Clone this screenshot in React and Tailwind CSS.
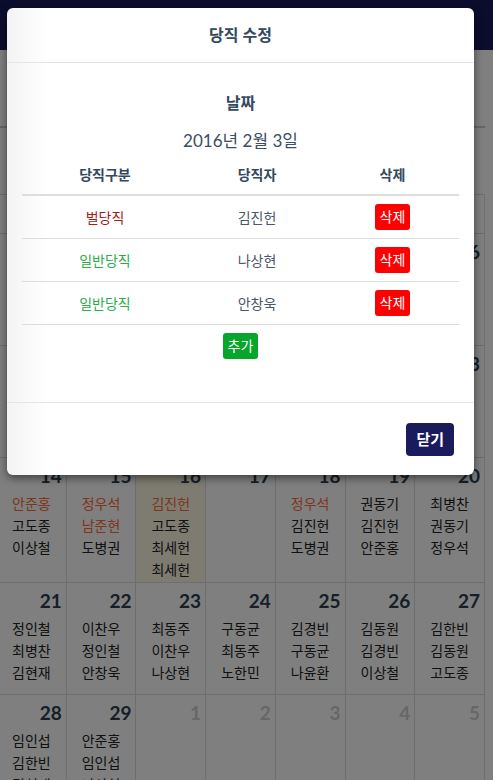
import React from 'react'

const font = "font-['Lato','Noto_Sans_CJK_KR',sans-serif]"

// r: 벌당직 (red name)
const weeks = [
  [
    { d: 31, other: true, n: [] },
    { d: 1, n: [{ t: '김동원', r: 1 }, { t: '구동균' }, { t: '나윤환' }] },
    { d: 2, n: [{ t: '최병찬' }, { t: '이찬우' }, { t: '정인철' }] },
    { d: 3, n: [{ t: '김진헌', r: 1 }, { t: '나상현' }, { t: '안창욱' }] },
    { d: 4, n: [{ t: '임인섭' }, { t: '김한빈' }, { t: '고도종' }] },
    { d: 5, n: [{ t: '도병권' }, { t: '권동기' }, { t: '이상철' }] },
    { d: 6, n: [{ t: '정우석' }, { t: '김경빈' }, { t: '최동주' }] },
  ],
  [
    { d: 7, n: [{ t: '안준홍' }, { t: '노한민' }, { t: '김현재' }] },
    { d: 8, n: [{ t: '남준현' }, { t: '최세헌' }, { t: '이상철' }] },
    { d: 9, n: [{ t: '구동균' }, { t: '김동원' }, { t: '정인철' }] },
    { d: 10, n: [{ t: '이찬우' }, { t: '나상현' }, { t: '김한빈' }] },
    { d: 11, n: [{ t: '권동기' }, { t: '고도종' }, { t: '안창욱' }] },
    { d: 12, n: [{ t: '최병찬' }, { t: '임인섭' }, { t: '나윤환' }] },
    { d: 13, n: [{ t: '김경빈' }, { t: '도병권' }, { t: '최동주' }] },
  ],
  [
    { d: 14, n: [{ t: '안준홍', r: 1 }, { t: '고도종' }, { t: '이상철' }] },
    { d: 15, n: [{ t: '정우석', r: 1 }, { t: '남준현', r: 1 }, { t: '도병권' }] },
    { d: 16, today: true, n: [{ t: '김진헌', r: 1 }, { t: '고도종' }, { t: '최세헌' }, { t: '최세헌' }] },
    { d: 17, n: [] },
    { d: 18, n: [{ t: '정우석', r: 1 }, { t: '김진헌' }, { t: '도병권' }] },
    { d: 19, n: [{ t: '권동기' }, { t: '김진헌' }, { t: '안준홍' }] },
    { d: 20, n: [{ t: '최병찬' }, { t: '권동기' }, { t: '정우석' }] },
  ],
  [
    { d: 21, n: [{ t: '정인철' }, { t: '최병찬' }, { t: '김현재' }] },
    { d: 22, n: [{ t: '이찬우' }, { t: '정인철' }, { t: '안창욱' }] },
    { d: 23, n: [{ t: '최동주' }, { t: '이찬우' }, { t: '나상현' }] },
    { d: 24, n: [{ t: '구동균' }, { t: '최동주' }, { t: '노한민' }] },
    { d: 25, n: [{ t: '김경빈' }, { t: '구동균' }, { t: '나윤환' }] },
    { d: 26, n: [{ t: '김동원' }, { t: '김경빈' }, { t: '이상철' }] },
    { d: 27, n: [{ t: '김한빈' }, { t: '김동원' }, { t: '고도종' }] },
  ],
  [
    { d: 28, n: [{ t: '임인섭' }, { t: '김한빈' }, { t: '김현재' }] },
    { d: 29, n: [{ t: '안준홍' }, { t: '임인섭' }, { t: '나상현' }] },
    { d: 1, other: true, n: [] },
    { d: 2, other: true, n: [] },
    { d: 3, other: true, n: [] },
    { d: 4, other: true, n: [] },
    { d: 5, other: true, n: [] },
  ],
]

const duties = [
  { kind: '벌당직', cls: 'text-[#a61c1c]', name: '김진헌' },
  { kind: '일반당직', cls: 'text-[#2aad48]', name: '나상현' },
  { kind: '일반당직', cls: 'text-[#2aad48]', name: '안창욱' },
]

function Calendar() {
  return (
    <div className="w-[488px] -ml-[3px]">
      <div className="grid grid-cols-7 h-[40px] border-t border-b border-[#dddddd]">
        {['일', '월', '화', '수', '목', '금', '토'].map((w) => (
          <div key={w} className="border-r border-[#dddddd] flex items-center justify-center text-[14px] font-bold text-[#2c3e50]">{w}</div>
        ))}
      </div>
      {weeks.map((week, wi) => (
        <div key={wi} className="grid grid-cols-7 min-h-[112px] border-b border-[#dddddd]">
          {week.map((c, ci) => (
            <div key={ci} className={`border-r border-[#dddddd] ${c.today ? 'bg-[#fcf8e3]' : ''}`}>
              <div className={`text-right pr-[4px] pt-[5px] text-[19px] leading-[26px] font-bold ${c.other ? 'text-[#cfcfcf]' : 'text-[#2c3e50]'}`}>{c.d}</div>
              <div className="mt-[4px] pl-[15px] pb-[1px] text-[14px] leading-[22px]">
                {c.n.map((p, pi) => (
                  <div key={pi} className={p.r ? 'text-[#ff6a3a]' : 'text-[#222222]'}>{p.t}</div>
                ))}
              </div>
            </div>
          ))}
        </div>
      ))}
    </div>
  )
}

function DutyModal() {
  return (
    <div className="absolute left-[7px] top-[8px] w-[467px] rounded-[6px] bg-[linear-gradient(to_right,#f3f3f3,#ffffff_40px)] shadow-[0_3px_9px_rgba(0,0,0,0.5)] text-[#34495e]">
      <div className="h-[55px] flex items-center justify-center border-b border-[#e5e5e5] text-[16px] font-bold">당직 수정</div>

      <div className="px-[15px] pt-[28px] pb-[43px]">
        <div className="text-center text-[16px] leading-[24px] font-bold">날짜</div>
        <div className="mt-[14px] text-center text-[17px] leading-[24px] text-[#3b4e63]">2016년 2월 3일</div>

        <div className="grid grid-cols-[166px_138px_1fr] pt-[12px] pb-[9px] leading-[20px] text-[14px] font-bold text-center border-b-2 border-[#dddddd]">
          <div>당직구분</div>
          <div>당직자</div>
          <div>삭제</div>
        </div>
        {duties.map((d, i) => (
          <div key={i} className="grid grid-cols-[166px_138px_1fr] h-[43px] items-center text-center text-[14px] border-b border-[#dddddd]">
            <div className={d.cls}>{d.kind}</div>
            <div className="text-[#4a5768]">{d.name}</div>
            <div className="flex justify-center">
              <button className="h-[26px] px-[5px] rounded-[3px] bg-[#ff0000] text-white text-[14px] leading-none">삭제</button>
            </div>
          </div>
        ))}
        <div className="flex justify-center mt-[8px]">
          <button className="h-[26px] px-[5px] rounded-[3px] bg-[#07a52b] text-white text-[14px] leading-none">추가</button>
        </div>
      </div>

      <div className="border-t border-[#e5e5e5] flex justify-end pt-[20px] pb-[19px] pr-[20px]">
        <button className="h-[33px] px-[10px] rounded-[4px] bg-[#1a1b5c] text-white text-[15px] font-bold">닫기</button>
      </div>
    </div>
  )
}

export default function App() {
  return (
    <div className={`relative w-[493px] h-[780px] overflow-hidden bg-white ${font}`}>
      <header className="h-[50px] bg-[#191a5a]" />
      <div className="w-[485px] h-[78px] border-b-2 border-[#cccccc]" />
      <div className="mt-[66px]">
        <Calendar />
      </div>

      <div className="absolute inset-0 bg-black/50" />
      <DutyModal />
    </div>
  )
}
